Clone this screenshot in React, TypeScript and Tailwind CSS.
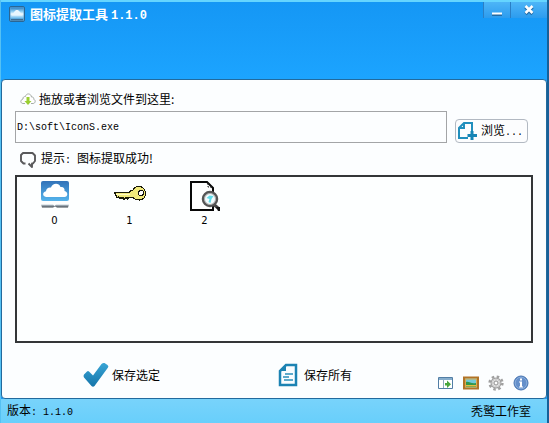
import { useState } from "react";
import type { ReactNode } from "react";

function CloudTile({ className }: { className: string }) {
  return (
    <svg viewBox="0 0 28 28" className={className} aria-hidden="true">
      <defs>
        <linearGradient id="sky" x1="0" y1="0" x2="0" y2="1">
          <stop offset="0" stopColor="#3272b8" />
          <stop offset="1" stopColor="#55b4ec" />
        </linearGradient>
        <linearGradient id="shade" x1="0" y1="0" x2="0" y2="1">
          <stop offset="0" stopColor="#c9d4dc" />
          <stop offset="1" stopColor="#39434c" />
        </linearGradient>
      </defs>
      <rect x="0" y="0" width="28" height="20" rx="2" fill="url(#sky)" />
      <path d="M5 16c-3.500-.4-4-5 0-5.700C5 7 8 6 10 6.500 11 2 18 1 19.500 6c3-.5 4.500 1.500 4 4 4 1 3.500 6 0 6z" fill="#fff" />
      <path d="M0 23.500h12l1.500 1.500 1.500-1.500h13l-1 3H16l-2-1-2 1H1z" fill="url(#shade)" />
    </svg>
  );
}

function AppLogo() {
  return (
    <svg viewBox="0 0 16 16" className="size-4 shrink-0" aria-hidden="true">
      <defs>
        <linearGradient id="logo" x1="0" y1="0" x2="0" y2="1">
          <stop offset="0" stopColor="#2c7fc2" />
          <stop offset=".35" stopColor="#8dcdf3" />
          <stop offset=".6" stopColor="#f4fbff" />
          <stop offset="1" stopColor="#63b8ee" />
        </linearGradient>
      </defs>
      <rect x=".5" y=".5" width="15" height="15" rx="1.500" fill="#5fa3d3" stroke="#2b6694" />
      <path d="M1.500 1.500h13v11h-13z" fill="url(#logo)" />
      <path d="M3 9.500c0-3 2-2 2.500-4 1-2 4-2 5 0 1 2 2.500 1 2.500 4z" fill="#eaf7ff" />
      <path d="M2 13h12v1.500H2z" fill="#3e6c92" />
    </svg>
  );
}

function KeyIcon() {
  return (
    <svg viewBox="0 0 32 28" className="h-7 w-8" shapeRendering="crispEdges" aria-hidden="true">
      <path d="M.5 11.500h15l1-2h2c1-2 3-4 6-4h2c3 1 5 3 5 7s-3 6.500-6 6.500c-3 0-5.500-1-7-3h-3l-1 1h-1l-1-1-1.500 1.500h-1l-1-1-1.500 1.500-2-1.500H3z" fill="#f1ea7c" stroke="#181808" strokeLinejoin="bevel" />
      <path d="M2 13h14" stroke="#fffbc4" />
      <path d="m4 15.500 2 2 2-1 2 2 2-2 2 1.500" fill="none" stroke="#181808" strokeWidth="1.500" />
      <circle cx="27" cy="12" r="2.500" fill="#fff" stroke="#111" />
    </svg>
  );
}

function SearchPageIcon() {
  return (
    <svg viewBox="0 0 30 31" className="h-[31px] w-[30px]" aria-hidden="true">
      <path d="M1 1h16l6 6v22H1z" fill="#fefefe" stroke="#080808" strokeWidth="2" />
      <path d="M18 2v4h4" fill="none" stroke="#222" strokeDasharray="2 1" />
      <path d="m22 22 6 5" stroke="#444" strokeWidth="3" />
      <circle cx="20" cy="18" r="7" fill="#f4fdff" stroke="#555" strokeWidth="2.500" />
      <circle cx="20" cy="18" r="5.500" fill="none" stroke="#aaa" />
      <path d="m16.500 17 3-2.500 4 .5-2 3-1 4-2-1 1-3z" fill="#63dce9" />
      <path d="M26 26h4v4h-2z" fill="#111" />
    </svg>
  );
}

function CloudDownIcon() {
  return (
    <svg viewBox="0 0 16 14" className="h-3.5 w-4 shrink-0" aria-hidden="true">
      <path d="M5 11.500H3C.5 11.500-.3 8 3 7c-.2-2 1-2.500 2.500-2.500C6 1 11 1 11.500 5c2-.1 2.500 1 2.200 2.300C16 8 15.500 11.500 13 11.500h-2" fill="#fff" stroke="#a5aca7" />
      <path d="M6.500 5h3v4h2L8 13 4.500 9h2z" fill="#9bcf32" />
    </svg>
  );
}

function BubbleIcon() {
  return (
    <svg viewBox="0 0 16 16" className="size-4 shrink-0" aria-hidden="true">
      <path d="M5.500 11.500H3.500L1 9V3l2-2h9.500L15 3.500V9l-2 2.500h-1v3.500L8.500 11.500" fill="none" stroke="#59595b" strokeWidth="1.900" strokeLinejoin="round" />
    </svg>
  );
}

function AddPageIcon() {
  return (
    <svg viewBox="0 0 19 18" className="h-[18px] w-[19px] shrink-0" aria-hidden="true">
      <path d="M6 1h8v8M10 16H1V6l5-5v5H1" fill="none" stroke="#218fbd" strokeWidth="2" />
      <path d="M14 9v9M9.500 13.500H19" stroke="#1785b5" strokeWidth="3" />
    </svg>
  );
}

function TickIcon() {
  return (
    <svg viewBox="0 0 26 26" className="size-[26px] shrink-0" aria-hidden="true">
      <defs>
        <linearGradient id="tick" x1="0" y1="0" x2="0" y2="1">
          <stop offset="0" stopColor="#39a5d5" />
          <stop offset="1" stopColor="#1575aa" />
        </linearGradient>
      </defs>
      <path d="M1 12.500 4 9.500q1-1 2 0l4 4L18.500 2q1.500-1.500 3-1L24.500 3q1.500 1 .5 2.500L11.500 24q-1.500 1.500-3 0L1 15.500q-1-1.500 0-3z" fill="url(#tick)" />
    </svg>
  );
}

function DocumentIcon() {
  return (
    <svg viewBox="0 0 20 24" className="h-6 w-5 shrink-0" aria-hidden="true">
      <path d="M8 2h10v20H2V8z" fill="#fafdff" stroke="#1c83b3" strokeWidth="2.500" />
      <path d="M1 8 8 1v7z" fill="#1c83b3" />
      <path d="M7 11h8M5 14h6M6 17h9" stroke="#2b8fba" strokeWidth="1.500" />
    </svg>
  );
}

function ExportIcon() {
  return (
    <svg viewBox="0 0 16 16" className="size-4" aria-hidden="true">
      <path d="M.5 2.500h14v11H.5z" fill="#fff" stroke="#527ea5" />
      <path d="M1 3h13v2H1z" fill="#86aecd" />
      <path d="M5.500 5v8" stroke="#8eaabd" />
      <path d="M7 8h2V5.500L13 9.300 9 13v-2.500H7z" fill="#49a63c" />
    </svg>
  );
}

function PictureIcon() {
  return (
    <svg viewBox="0 0 16 16" className="size-4" aria-hidden="true">
      <path d="M1 2.500h14v11H1z" fill="#74cad8" stroke="#b27326" strokeWidth="2" />
      <path d="M2.500 4h11v8h-11z" fill="none" stroke="#dfa94e" />
      <path d="M3 7c3-1 5 2 10 1v4H3z" fill="#33974c" />
      <path d="M3 10h10v1.500H3z" fill="#e5bd42" />
    </svg>
  );
}

function GearIcon() {
  return (
    <svg viewBox="0 0 16 16" className="size-4" aria-hidden="true">
      <circle cx="8" cy="8" r="6.400" fill="none" stroke="#a0a0a0" strokeWidth="2.500" strokeDasharray="2.500 2.520" />
      <circle cx="8" cy="8" r="4.500" fill="#e0e0e0" stroke="#a3a3a3" strokeWidth="2" />
      <circle cx="8" cy="8" r="4" fill="none" stroke="#d8d8d8" />
      <circle cx="8" cy="8" r="2" fill="#fff" stroke="#929292" />
    </svg>
  );
}

function InfoIcon() {
  return (
    <svg viewBox="0 0 16 16" className="size-4" aria-hidden="true">
      <circle cx="8" cy="8" r="7" fill="#648fca" stroke="#4774b1" />
      <circle cx="8" cy="8" r="5.800" fill="none" stroke="#87acdb" />
      <path d="M7 3.500h2v2H7zM6 6.500h3v5h1v1H6v-1h1v-4H6z" fill="#fff" />
    </svg>
  );
}

function Mono({ children }: { children: ReactNode }) {
  return <span className="font-['Liberation_Mono',monospace] text-[10px]">{children}</span>;
}

const icons = [
  { id: 0, art: <CloudTile className="size-7" /> },
  { id: 1, art: <KeyIcon /> },
  { id: 2, art: <SearchPageIcon /> },
];

const tools = [
  { label: "导出", art: <ExportIcon /> },
  { label: "图片", art: <PictureIcon /> },
  { label: "设置", art: <GearIcon /> },
  { label: "关于", art: <InfoIcon /> },
];

export default function App() {
  const [path, setPath] = useState("D:\\soft\\IconS.exe");

  return (
    <div className="flex min-h-screen flex-col border-r-2 border-l border-l-[#55c1f3] border-r-[#176098] bg-[#1b9ffb] font-['Noto_Sans_CJK_SC',sans-serif] text-xs leading-4 text-black">
      <header className="flex h-[79px] items-start justify-between border-t-2 border-[#65d5ff] bg-linear-to-b from-[#1597f5] to-[#1ca4ff]">
        <h1 className="flex items-center gap-[5px] pt-0.5 pl-2 text-[13px] leading-5 font-bold text-white">
          <AppLogo />
          <span>
            图标提取工具 <span className="font-['Liberation_Mono',monospace] text-xs">1.1.0</span>
          </span>
        </h1>
        <div className="flex h-4 text-white">
          <button aria-label="最小化" className="flex w-[27px] items-center justify-center border-l border-[#2a7fc5] bg-linear-to-b from-[#4db5f7] to-[#2b9cef]">
            <svg viewBox="0 0 12 12" className="size-3" aria-hidden="true">
              <path d="M1 10.500h10" stroke="#236ba4" strokeWidth="3" />
              <path d="M1 9.500h10" stroke="#fff" strokeWidth="2" />
            </svg>
          </button>
          <button aria-label="关闭" className="flex w-[37px] items-center justify-center border-l border-[#2a7fc5] bg-linear-to-b from-[#4db5f7] to-[#2b9cef]">
            <svg viewBox="0 0 12 12" className="size-3" aria-hidden="true">
              <path d="m2.500 3 7 7m0-7-7 7" stroke="#236ba4" strokeWidth="3.500" />
              <path d="m2.500 2 7 7m0-7-7 7" stroke="#fff" strokeWidth="2.500" />
            </svg>
          </button>
        </div>
      </header>

      <main className="flex grow flex-col rounded-sm border border-[#226a9d] bg-[#fcfeff] px-[13px] pt-[11px]">
        <label htmlFor="path" className="flex items-center gap-[3px] pl-[5px]">
          <CloudDownIcon />
          拖放或者浏览文件到这里:
        </label>
        <div className="mt-1 flex items-end gap-2 pr-[5px]">
          <input
            id="path"
            value={path}
            onChange={(e) => setPath(e.target.value)}
            className="h-8 min-w-0 grow border border-[#a3a5a7] bg-[#fcfeff] px-px font-['Liberation_Mono',monospace] text-[10px] outline-none"
          />
          <button className="flex h-6 w-[73px] items-center gap-1 rounded border border-[#b2b9c2] bg-[#fcfdfe] pl-0.5">
            <AddPageIcon />
            <span>
              浏览<Mono>...</Mono>
            </span>
          </button>
        </div>
        <p className="mt-[5px] flex items-center gap-[5px] pt-0.5 pl-[5px]">
          <BubbleIcon />
          <span>
            提示<Mono>: </Mono>图标提取成功!
          </span>
        </p>
        <ul className="mt-1.5 flex grow border-2 border-[#343638] bg-[#fdffff] pt-1">
          {icons.map((icon) => (
            <li key={icon.id} className="w-[75px]">
              <button className="flex w-full flex-col items-center">
                <span className="flex h-8 items-start">{icon.art}</span>
                <span className="font-['DejaVu_Sans',sans-serif] text-[10px] leading-4">{icon.id}</span>
              </button>
            </li>
          ))}
        </ul>
        <div className="flex h-[55px] items-start justify-between pt-[18px]">
          <div className="grid grow grid-cols-[195px_1fr] pl-[68px]">
            <button className="flex h-7 items-center gap-[3px] justify-self-start">
              <TickIcon />
              保存选定
            </button>
            <button className="flex h-7 items-center gap-1.5 justify-self-start">
              <DocumentIcon />
              保存所有
            </button>
          </div>
          <div className="flex gap-[9px] self-end pr-1 pb-[7px]">
            {tools.map((tool) => (
              <button key={tool.label} aria-label={tool.label}>
                {tool.art}
              </button>
            ))}
          </div>
        </div>
      </main>

      <footer className="flex h-6 items-center justify-between bg-linear-to-b from-[#78d3fb] to-[#68cffb] pr-4 pl-1.5">
        <span>
          版本<Mono>: 1.1.0</Mono>
        </span>
        <span>秃鹫工作室</span>
      </footer>
    </div>
  );
}
